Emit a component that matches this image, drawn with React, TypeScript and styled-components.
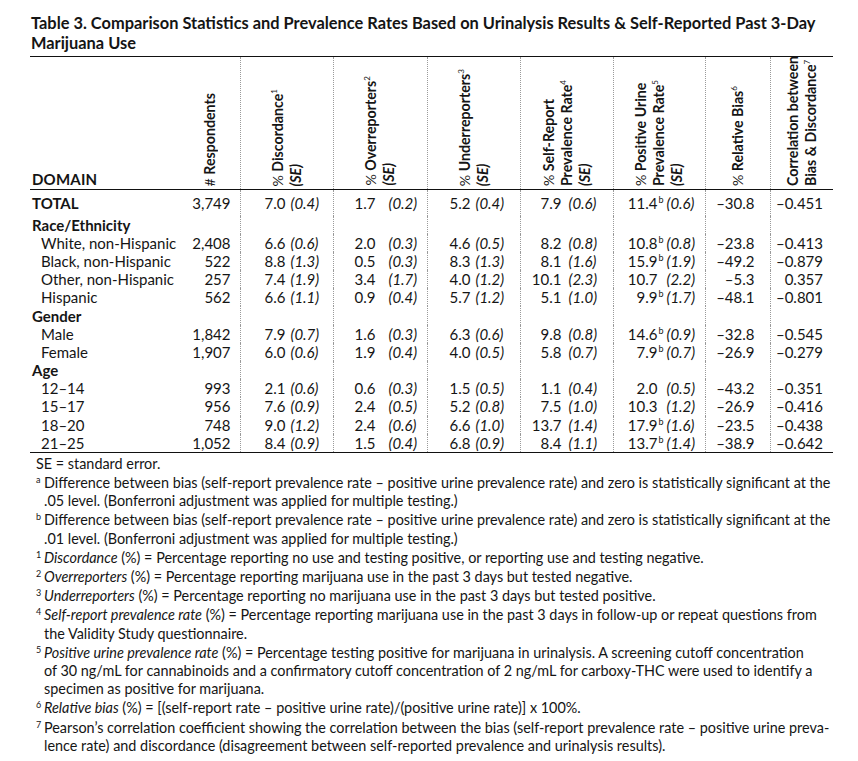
import React from "react";
import styled, { createGlobalStyle } from "styled-components";

const Global = createGlobalStyle`
  html, body { margin: 0; padding: 0; background: #fff; }
  body { font-family: Lato, "Open Sans", sans-serif; color: #151515; }
`;

const Page = styled.div`
  width: 858px;
  height: 761px;
  padding: 13px 0 0 30px;
  box-sizing: border-box;
  overflow: hidden;
`;

const Title = styled.h1`
  margin: 0 0 3px 1px;
  font-size: 16.4px;
  line-height: 20px;
  font-weight: 700;
  width: 803px;
  white-space: nowrap;
`;

const Table = styled.table`
  width: 803px;
  border-collapse: collapse;
  table-layout: fixed;
  border-top: 1px solid #111;
  border-bottom: 1px solid #111;
  font-size: 15px;
`;

const HeadRow = styled.tr`
  border-bottom: 1px solid #111;
`;

const Th = styled.th<{ $divider?: boolean }>`
  padding: 0;
  vertical-align: bottom;
  border-left: ${(p) => (p.$divider ? "1px dotted #9a9a9a" : "none")};
  font-weight: 700;
`;

const HeadInner = styled.div`
  height: 132px;
  box-sizing: border-box;
  padding-bottom: 3px;
  display: flex;
  justify-content: center;
  align-items: flex-end;
`;

const DomainTh = styled.th`
  padding: 0 0 1px 2px;
  vertical-align: bottom;
  text-align: left;
  font-weight: 700;
  font-size: 15px;
  line-height: 18px;
  letter-spacing: 0.2px;
`;

const Rotated = styled.div`
  writing-mode: vertical-rl;
  transform: rotate(180deg);
  text-align: left;
  line-height: 18px;
  font-size: 14.2px;
  white-space: nowrap;
`;

const Pct = styled.span`
  font-weight: 400;
`;

const SEHead = styled.span`
  font-style: italic;
`;

const Sup = styled.sup`
  font-size: 8px;
  font-weight: 400;
  vertical-align: 4px;
  line-height: 0;
`;

const Row = styled.tr<{ $pad?: boolean }>`
  height: ${(p) => (p.$pad ? "26px" : "18.2px")};
`;

const Td = styled.td<{ $divider?: boolean; $align?: string; $pr?: number }>`
  padding: 0 ${(p) => p.$pr ?? 0}px 0 0;
  border-left: ${(p) => (p.$divider ? "1px dotted #9a9a9a" : "none")};
  text-align: ${(p) => p.$align ?? "left"};
  line-height: 18px;
  height: 18px;
  white-space: nowrap;
  vertical-align: middle;
`;

const Label = styled.td<{ $indent?: boolean; $bold?: boolean }>`
  padding: 0 0 0 ${(p) => (p.$indent ? 11 : 2)}px;
  font-weight: ${(p) => (p.$bold ? 700 : 400)};
  line-height: 18px;
  white-space: nowrap;
`;

const Val = styled.span<{ $w: number }>`
  display: inline-block;
  width: ${(p) => p.$w}px;
  text-align: right;
  vertical-align: top;
`;

const Mark = styled.span<{ $w: number }>`
  display: inline-block;
  vertical-align: top;
  width: ${(p) => p.$w}px;
  height: 18px;
  font-size: 9px;
  line-height: 11px;
  padding-left: 1px;
  box-sizing: border-box;
`;

const SE = styled.span`
  font-style: italic;
`;

const Notes = styled.div`
  width: 803px;
  font-size: 14.4px;
  line-height: 18.2px;
  padding-top: 2px;
`;

const Note = styled.p<{ $plain?: boolean }>`
  margin: 0 0 1px 0;
  padding-left: ${(p) => (p.$plain ? 6 : 14)}px;
  text-indent: ${(p) => (p.$plain ? 0 : -8)}px;
  white-space: nowrap;
`;

const NoteMark = styled.sup`
  display: inline-block;
  width: 8px;
  text-indent: 0;
  font-size: 9px;
  vertical-align: 5px;
  line-height: 0;
`;

const Em = styled.i``;

type Stat = { v: string; se: string; b?: boolean };
type Data = {
  label: string;
  kind: "total" | "group" | "item";
  n?: string;
  d?: Stat;
  o?: Stat;
  u?: Stat;
  s?: Stat;
  p?: Stat;
  rb?: string;
  c?: string;
};

const st = (v: string, se: string, b?: boolean): Stat => ({ v, se, b });

const rows: Data[] = [
  { label: "TOTAL", kind: "total", n: "3,749", d: st("7.0", "(0.4)"), o: st("1.7", "(0.2)"), u: st("5.2", "(0.4)"), s: st("7.9", "(0.6)"), p: st("11.4", "(0.6)", true), rb: "–30.8", c: "–0.451" },
  { label: "Race/Ethnicity", kind: "group" },
  { label: "White, non-Hispanic", kind: "item", n: "2,408", d: st("6.6", "(0.6)"), o: st("2.0", "(0.3)"), u: st("4.6", "(0.5)"), s: st("8.2", "(0.8)"), p: st("10.8", "(0.8)", true), rb: "–23.8", c: "–0.413" },
  { label: "Black, non-Hispanic", kind: "item", n: "522", d: st("8.8", "(1.3)"), o: st("0.5", "(0.3)"), u: st("8.3", "(1.3)"), s: st("8.1", "(1.6)"), p: st("15.9", "(1.9)", true), rb: "–49.2", c: "–0.879" },
  { label: "Other, non-Hispanic", kind: "item", n: "257", d: st("7.4", "(1.9)"), o: st("3.4", "(1.7)"), u: st("4.0", "(1.2)"), s: st("10.1", "(2.3)"), p: st("10.7", "(2.2)"), rb: "–5.3", c: "0.357" },
  { label: "Hispanic", kind: "item", n: "562", d: st("6.6", "(1.1)"), o: st("0.9", "(0.4)"), u: st("5.7", "(1.2)"), s: st("5.1", "(1.0)"), p: st("9.9", "(1.7)", true), rb: "–48.1", c: "–0.801" },
  { label: "Gender", kind: "group" },
  { label: "Male", kind: "item", n: "1,842", d: st("7.9", "(0.7)"), o: st("1.6", "(0.3)"), u: st("6.3", "(0.6)"), s: st("9.8", "(0.8)"), p: st("14.6", "(0.9)", true), rb: "–32.8", c: "–0.545" },
  { label: "Female", kind: "item", n: "1,907", d: st("6.0", "(0.6)"), o: st("1.9", "(0.4)"), u: st("4.0", "(0.5)"), s: st("5.8", "(0.7)"), p: st("7.9", "(0.7)", true), rb: "–26.9", c: "–0.279" },
  { label: "Age", kind: "group" },
  { label: "12–14", kind: "item", n: "993", d: st("2.1", "(0.6)"), o: st("0.6", "(0.3)"), u: st("1.5", "(0.5)"), s: st("1.1", "(0.4)"), p: st("2.0", "(0.5)"), rb: "–43.2", c: "–0.351" },
  { label: "15–17", kind: "item", n: "956", d: st("7.6", "(0.9)"), o: st("2.4", "(0.5)"), u: st("5.2", "(0.8)"), s: st("7.5", "(1.0)"), p: st("10.3", "(1.2)"), rb: "–26.9", c: "–0.416" },
  { label: "18–20", kind: "item", n: "748", d: st("9.0", "(1.2)"), o: st("2.4", "(0.6)"), u: st("6.6", "(1.0)"), s: st("13.7", "(1.4)"), p: st("17.9", "(1.6)", true), rb: "–23.5", c: "–0.438" },
  { label: "21–25", kind: "item", n: "1,052", d: st("8.4", "(0.9)"), o: st("1.5", "(0.4)"), u: st("6.8", "(0.9)"), s: st("8.4", "(1.1)"), p: st("13.7", "(1.4)", true), rb: "–38.9", c: "–0.642" },
];

type ColSpec = { key: "d" | "o" | "u" | "s" | "p"; end: number; gap: number };
const statCols: ColSpec[] = [
  { key: "d", end: 45, gap: 5 },
  { key: "o", end: 42, gap: 13 },
  { key: "u", end: 43, gap: 5 },
  { key: "s", end: 41, gap: 7 },
  { key: "p", end: 44, gap: 9 },
];

const widths = [150, 60, 93, 94, 93, 93, 92, 65, 63];

function StatCell({ s, spec }: { s?: Stat; spec: ColSpec }) {
  if (!s) return <Td $divider />;
  return (
    <Td $divider>
      <Val $w={spec.end}>{s.v}</Val>
      <Mark $w={spec.gap}>{s.b ? "b" : ""}</Mark>
      <SE>{s.se}</SE>
    </Td>
  );
}

function Head({ divider, children }: { divider?: boolean; children: React.ReactNode }) {
  return (
    <Th $divider={divider}>
      <HeadInner>
        <Rotated>{children}</Rotated>
      </HeadInner>
    </Th>
  );
}

export default function App() {
  return (
    <Page>
      <Global />
      <Title>
        Table 3. Comparison Statistics and Prevalence Rates Based on Urinalysis Results &amp; Self-Reported Past 3-Day
        <br />
        Marijuana Use
      </Title>
      <Table>
        <colgroup>
          {widths.map((w, i) => (
            <col key={i} style={{ width: w }} />
          ))}
        </colgroup>
        <thead>
          <HeadRow>
            <DomainTh>DOMAIN</DomainTh>
            <Head>
              <Pct>#</Pct> Respondents
            </Head>
            <Head divider>
              <Pct>%</Pct> Discordance<Sup>1</Sup>
              <br />
              <SEHead>(SE)</SEHead>
            </Head>
            <Head divider>
              <Pct>%</Pct> Overreporters<Sup>2</Sup>
              <br />
              <SEHead>(SE)</SEHead>
            </Head>
            <Head divider>
              <Pct>%</Pct> Underreporters<Sup>3</Sup>
              <br />
              <SEHead>(SE)</SEHead>
            </Head>
            <Head divider>
              <Pct>%</Pct> Self-Report
              <br />
              Prevalence Rate<Sup>4</Sup>
              <br />
              <SEHead>(SE)</SEHead>
            </Head>
            <Head divider>
              <Pct>%</Pct> Positive Urine
              <br />
              Prevalence Rate<Sup>5</Sup>
              <br />
              <SEHead>(SE)</SEHead>
            </Head>
            <Head divider>
              <Pct>%</Pct> Relative Bias<Sup>6</Sup>
            </Head>
            <Head divider>
              Correlation between
              <br />
              Bias &amp; Discordance<Sup>7</Sup>
            </Head>
          </HeadRow>
        </thead>
        <tbody>
          {rows.map((r, i) => (
            <Row key={i} $pad={r.kind === "total"}>
              <Label $indent={r.kind === "item"} $bold={r.kind !== "item"}>
                {r.label}
              </Label>
              <Td $align="right" $pr={9}>
                {r.n}
              </Td>
              {statCols.map((c) => (
                <StatCell key={c.key} s={r[c.key]} spec={c} />
              ))}
              <Td $divider $align="right" $pr={15}>
                {r.rb}
              </Td>
              <Td $divider $align="right" $pr={10}>
                {r.c}
              </Td>
            </Row>
          ))}
        </tbody>
      </Table>
      <Notes>
        <Note $plain>SE = standard error.</Note>
        <Note>
          <NoteMark>a</NoteMark>Difference between bias (self-report prevalence rate – positive urine prevalence rate) and zero is statistically significant at the
          <br />
          .05 level. (Bonferroni adjustment was applied for multiple testing.)
        </Note>
        <Note>
          <NoteMark>b</NoteMark>Difference between bias (self-report prevalence rate – positive urine prevalence rate) and zero is statistically significant at the
          <br />
          .01 level. (Bonferroni adjustment was applied for multiple testing.)
        </Note>
        <Note>
          <NoteMark>1</NoteMark>
          <Em>Discordance</Em> (%) = Percentage reporting no use and testing positive, or reporting use and testing negative.
        </Note>
        <Note>
          <NoteMark>2</NoteMark>
          <Em>Overreporters</Em> (%) = Percentage reporting marijuana use in the past 3 days but tested negative.
        </Note>
        <Note>
          <NoteMark>3</NoteMark>
          <Em>Underreporters</Em> (%) = Percentage reporting no marijuana use in the past 3 days but tested positive.
        </Note>
        <Note>
          <NoteMark>4</NoteMark>
          <Em>Self-report prevalence rate</Em> (%) = Percentage reporting marijuana use in the past 3 days in follow-up or repeat questions from
          <br />
          the Validity Study questionnaire.
        </Note>
        <Note>
          <NoteMark>5</NoteMark>
          <Em>Positive urine prevalence rate</Em> (%) = Percentage testing positive for marijuana in urinalysis. A screening cutoff concentration
          <br />
          of 30 ng/mL for cannabinoids and a confirmatory cutoff concentration of 2 ng/mL for carboxy-THC were used to identify a
          <br />
          specimen as positive for marijuana.
        </Note>
        <Note>
          <NoteMark>6</NoteMark>
          <Em>Relative bias</Em> (%) = [(self-report rate – positive urine rate)/(positive urine rate)] x 100%.
        </Note>
        <Note>
          <NoteMark>7</NoteMark>Pearson’s correlation coefficient showing the correlation between the bias (self-report prevalence rate – positive urine preva-
          <br />
          lence rate) and discordance (disagreement between self-reported prevalence and urinalysis results).
        </Note>
      </Notes>
    </Page>
  );
}
